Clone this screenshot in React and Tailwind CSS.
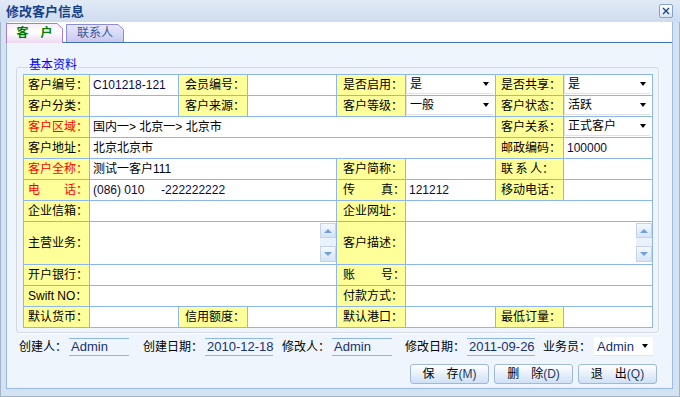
const Label = ({ children, red = false, className = 'pl-[4px]' }) => (
  <div
    className={`flex items-center whitespace-nowrap bg-[#ffff99] ${red ? 'text-[#ff0000]' : 'text-black'} ${className}`}
  >
    {children}
  </div>
);

const SpreadLabel = ({ parts, red = false, className = 'pl-[4px]' }) => (
  <div
    className={`flex items-center justify-between whitespace-nowrap bg-[#ffff99] ${red ? 'text-[#ff0000]' : 'text-black'} ${className}`}
  >
    {parts.map((part) => (
      <span key={part}>{part}</span>
    ))}
  </div>
);

const Value = ({ children, className = '' }) => (
  <div className={`flex items-center whitespace-pre bg-white pl-[3px] text-[#0b0b3b] ${className}`}>
    {children}
  </div>
);

const Caret = ({ className = '' }) => (
  <span
    className={`h-0 w-0 border-x-[3.5px] border-t-[4px] border-x-transparent border-t-black ${className}`}
  />
);

const Select = ({ value }) => (
  <div className="flex bg-white pb-px pr-[2px]">
    <div className="flex flex-1 items-center border-b border-l border-[#e2e2e2] pl-[3px] text-black">
      <span>{value}</span>
      <Caret className="ml-auto mr-[4px]" />
    </div>
  </div>
);

const ScrollButton = ({ up = false, className = '' }) => (
  <div
    className={`flex items-center justify-center border border-[#c5d3e4] bg-linear-to-b from-[#f5f9fe] to-[#d5e4f7] ${className}`}
  >
    {up ? (
      <span className="h-0 w-0 border-x-[4px] border-b-[4px] border-x-transparent border-b-[#6fa0e0]" />
    ) : (
      <span className="h-0 w-0 border-x-[4px] border-t-[4px] border-x-transparent border-t-[#6fa0e0]" />
    )}
  </div>
);

const TextArea = () => (
  <div className="col-span-3 flex bg-white">
    <div className="flex-1" />
    <div className="flex w-[16px] flex-col pb-[2px] pt-px">
      <ScrollButton up className="h-[15px]" />
      <div className="flex-1 bg-[#e8f1fc]" />
      <ScrollButton className="h-[16px]" />
    </div>
  </div>
);

const FooterField = ({ children, className = '' }) => (
  <div
    className={`flex h-[18px] items-center whitespace-nowrap border-y border-[#8db6ea] pl-[2px] text-[13px] text-[#16306e] ${className}`}
  >
    {children}
  </div>
);

const TabShape = ({ w, h, id, stops, stroke }) => (
  <svg className="absolute inset-0" width={w} height={h} viewBox={`0 0 ${w} ${h}`}>
    <defs>
      <linearGradient id={id} x1="0" y1="0" x2="0" y2="1">
        {stops.map(([offset, color]) => (
          <stop key={offset} offset={offset} stopColor={color} />
        ))}
      </linearGradient>
    </defs>
    <path
      d={`M0.5 ${h} V0.5 H${w - 6} L${w - 0.5} 5.5 V${h}`}
      fill={`url(#${id})`}
      stroke={stroke}
    />
  </svg>
);

const Button = ({ text, hotkey }) => (
  <button
    className="flex h-[20px] w-[79px] items-center justify-center rounded-[3px] border border-[#a2b9d6] bg-linear-to-b from-white to-[#cfe1f6] text-[12px] text-black"
    type="button"
  >
    <span className="whitespace-pre">{text}</span>
    <span className="text-[#23386b]">({hotkey})</span>
  </button>
);

export default function App() {
  return (
    <div className="h-[397px] w-[680px] overflow-hidden bg-[#d5e2f2] font-['Liberation_Sans','Noto_Sans_CJK_SC',sans-serif] text-[12px] leading-none shadow-[inset_0_0_0_1px_#a3b4c9]">
      {/* title bar */}
      <div className="flex h-[22px] items-center justify-between bg-linear-to-b from-[#e2eaf6] to-[#cedcee] pl-[6px] pr-[7px]">
        <span className="text-[13px] font-bold text-[#15428b]">修改客户信息</span>
        <div className="flex h-[14px] w-[14px] items-center justify-center rounded-[2px] border border-[#86a3c6] bg-linear-to-b from-white to-[#d9e5f4]">
          <svg width="8" height="8" viewBox="0 0 8 8">
            <path d="M1 1 L7 7 M7 1 L1 7" stroke="#15428b" strokeWidth="1.3" />
          </svg>
        </div>
      </div>

      <div className="ml-[6px] w-[667px] border-x border-b border-[#99bbe8]">
        {/* tabs */}
        <div className="flex h-[21px] items-end border-b border-[#3f70b2] bg-white">
          <div className="relative z-10 -mb-px -ml-px flex h-[20px] w-[57px] items-center justify-center">
            <TabShape
              w={57}
              h={20}
              id="tabActive"
              stops={[
                ['0', '#f5eefa'],
                ['0.45', '#ffffff'],
                ['1', '#ecd8f1'],
              ]}
              stroke="#a77fc9"
            />
            <span className="relative whitespace-pre font-bold text-[#008000]">客　户</span>
          </div>
          <div className="relative ml-[3px] flex h-[18px] w-[58px] items-center justify-center">
            <TabShape
              w={58}
              h={18}
              id="tabIdle"
              stops={[
                ['0', '#e8e8fb'],
                ['0.5', '#d9d9f6'],
                ['1', '#c8c8f0'],
              ]}
              stroke="#8b8bd9"
            />
            <span className="relative text-[#34589a]">联系人</span>
          </div>
        </div>

        {/* panel */}
        <div className="h-[345px] bg-[#eef5fc] pl-[9px] pt-[24px]">
          <div className="relative w-[643px] rounded-[3px] border border-[#d2d9e3] pb-[4px] pl-[6px] pr-[5px] pt-[6px] shadow-[1px_1px_0_#ffffff]">
            <span className="absolute -top-[10px] left-[11px] bg-[#eef5fc] px-px leading-[14px] text-[#0000ff]">
              基本资料
            </span>

            <div className="grid w-[630px] grid-cols-[65px_88px_68px_88px_68px_89px_67px_88px] grid-rows-[repeat(7,20px)_42px_repeat(3,20px)] gap-px border border-[#8db6ea] bg-[#8db6ea]">
              <Label>客户编号：</Label>
              <Value>C101218-121</Value>
              <Label className="pl-[6px]">会员编号：</Label>
              <Value />
              <Label className="pl-[6px]">是否启用：</Label>
              <Select value="是" />
              <Label className="pl-[5px]">是否共享：</Label>
              <Select value="是" />

              <Label>客户分类：</Label>
              <Value />
              <Label className="pl-[6px]">客户来源：</Label>
              <Value />
              <Label className="pl-[6px]">客户等级：</Label>
              <Select value="一般" />
              <Label className="pl-[5px]">客户状态：</Label>
              <Select value="活跃" />

              <Label red>客户区域：</Label>
              <Value className="col-span-5 text-black">国内一&gt; 北京一&gt; 北京市</Value>
              <Label className="pl-[5px]">客户关系：</Label>
              <Select value="正式客户" />

              <Label>客户地址：</Label>
              <Value className="col-span-5 text-black">北京北京市</Value>
              <Label className="pl-[5px]">邮政编码：</Label>
              <Value>100000</Value>

              <Label red>客户全称：</Label>
              <Value className="col-span-3 text-black">测试一客户111</Value>
              <Label className="pl-[6px]">客户简称：</Label>
              <Value />
              <SpreadLabel parts={['联', '系', '人：']} className="pl-[5px] pr-[9px]" />
              <Value />

              <SpreadLabel parts={['电', '话：']} red className="pl-[4px] pr-px" />
              <Value className="col-span-3">{'(086) 010     -222222222'}</Value>
              <SpreadLabel parts={['传', '真：']} className="pl-[6px]" />
              <Value>121212</Value>
              <Label className="pl-[5px]">移动电话：</Label>
              <Value />

              <Label>企业信箱：</Label>
              <Value className="col-span-3" />
              <Label className="pl-[6px]">企业网址：</Label>
              <Value className="col-span-3" />

              <Label>主营业务：</Label>
              <TextArea />
              <Label className="pl-[6px]">客户描述：</Label>
              <TextArea />

              <Label>开户银行：</Label>
              <Value className="col-span-3" />
              <SpreadLabel parts={['账', '号：']} className="pl-[6px]" />
              <Value className="col-span-3" />

              <Label>Swift NO：</Label>
              <Value className="col-span-3" />
              <Label className="pl-[6px]">付款方式：</Label>
              <Value className="col-span-3" />

              <Label>默认货币：</Label>
              <Value />
              <Label className="pl-[6px]">信用额度：</Label>
              <Value />
              <Label className="pl-[6px]">默认港口：</Label>
              <Value />
              <Label className="pl-[5px]">最低订量：</Label>
              <Value />
            </div>
          </div>

          {/* footer */}
          <div className="ml-[3px] mt-[4px] flex h-[19px] items-center text-black">
            <span>创建人：</span>
            <FooterField className="ml-[2px] w-[60px]">Admin</FooterField>
            <span className="ml-[14px]">创建日期：</span>
            <FooterField className="ml-[2px] w-[68px]">2010-12-18</FooterField>
            <span className="ml-[9px]">修改人：</span>
            <FooterField className="ml-[2px] w-[60px]">Admin</FooterField>
            <span className="ml-[13px]">修改日期：</span>
            <FooterField className="ml-[2px] w-[68px]">2011-09-26</FooterField>
            <span className="ml-[8px]">业务员：</span>
            <div className="ml-[3px] flex h-[19px] w-[59px] items-center border-b border-[#e4e4e4] bg-white pl-[3px] text-[13px] text-[#16306e]">
              <span>Admin</span>
              <Caret className="ml-auto mr-[5px]" />
            </div>
          </div>

          <div className="mr-[15px] mt-[8px] flex justify-end gap-[5px]">
            <Button text="保　存" hotkey="M" />
            <Button text="删　除" hotkey="D" />
            <Button text="退　出" hotkey="Q" />
          </div>
        </div>
      </div>
    </div>
  );
}
